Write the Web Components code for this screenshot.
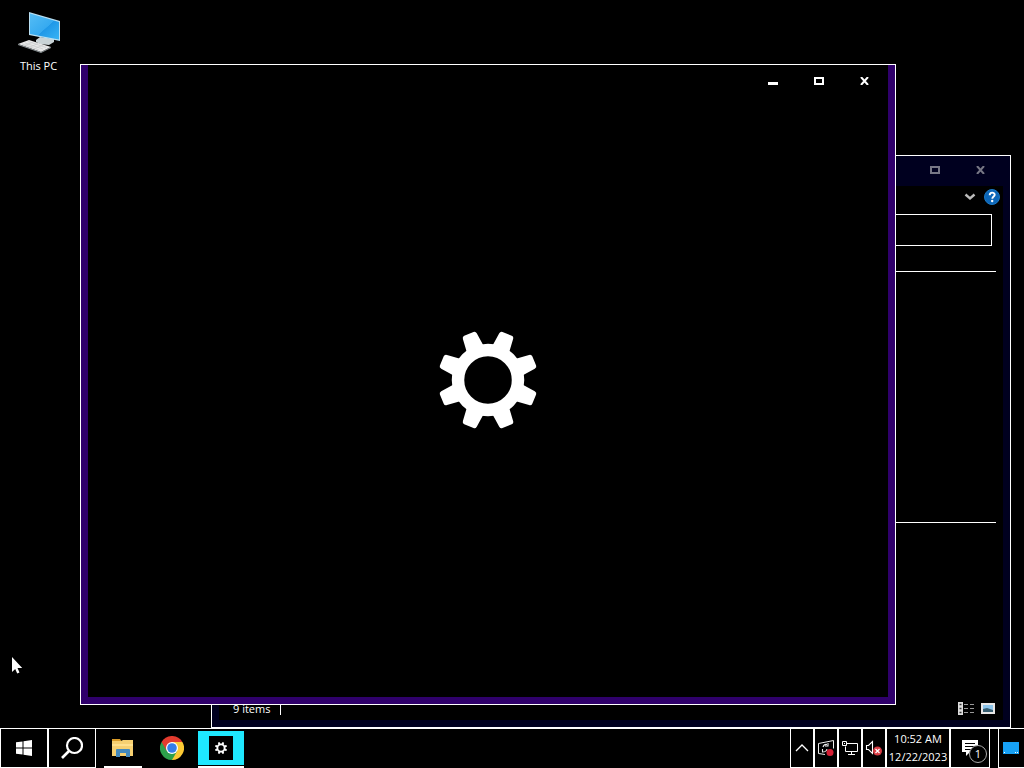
<!DOCTYPE html>
<html lang="en">
<head>
<meta charset="utf-8">
<title>Desktop</title>
<style>
html, body { margin: 0; height: 100%; background: #000; }
body { overflow: hidden; font: 11px/18px "Open Sans", "Noto Sans", sans-serif; color: #fff; cursor: default; }
</style>
</head>
<body>
<desk-top>
  <desk-shortcut slot="items">This PC</desk-shortcut>
  <explorer-window slot="items"></explorer-window>
  <settings-window slot="items"></settings-window>
  <mouse-pointer slot="items"></mouse-pointer>
  <task-bar slot="bar"></task-bar>
</desk-top>
<script>
const define = (name, html) => customElements.define(name, class extends HTMLElement {
  constructor() {
    super();
    this.attachShadow({ mode: 'open' }).innerHTML =
      '<style>:host,*{box-sizing:border-box}button{font:inherit;color:inherit;background:none;border:0;padding:0;margin:0;display:flex;align-items:center;justify-content:center}svg{display:block;flex:none}</style>' + html;
  }
});

define('desk-top', `
<style>
:host { display: flex; flex-direction: column; height: 100vh; }
main { position: relative; flex: 1; min-height: 0; }
</style>
<main><slot name="items"></slot></main>
<slot name="bar"></slot>`);

define('desk-shortcut', `
<style>
:host { position: absolute; left: 0; top: 10px; width: 77px; }
button { flex-direction: column; width: 100%; gap: 3px; }
</style>
<button>
<svg width="48" height="44" viewBox="0 0 48 44">
  <defs><linearGradient id="g" x1="0" y1="0" x2="1" y2="1"><stop offset="0" stop-color="#55bdf5"/><stop offset=".55" stop-color="#36aaf0"/><stop offset=".56" stop-color="#1f98e8"/><stop offset="1" stop-color="#38b4f5"/></linearGradient></defs>
  <path d="M21 30l4-3 14 2v3l-5 3-9-1-4-2z" fill="#c9d3d6"/>
  <path d="M14 2l31 9v20l-31-6z" fill="#b9dff2"/>
  <path d="M15 3.500l29 8.500v17.500l-29-5.500z" fill="url(#g)"/>
  <path d="M3 34l11-4 22 7-10 5z" fill="#e8e8e8"/>
  <path d="M7 34l17 6M10 33l18 6M13 31.500l18 6M9 36l9-4M14 37.500l9-4M19 39l9-4" stroke="#c2c6c8" stroke-width=".6"/>
  <path d="M3 34l23 8 10-5v1l-10 5-23-8z" fill="#8c9498"/>
</svg>
<slot></slot>
</button>`);

define('explorer-window', `
<style>
:host { position: absolute; left: 211px; top: 155px; right: 13px; bottom: 0; display: flex; flex-direction: column;
  border: 1px solid #fff; background: #00001f; padding: 0 7px 7px; }
header { height: 30px; flex: none; display: flex; justify-content: flex-end; color: #777785; margin-right: -1px; }
header button { width: 46px; height: 28px; }
.body { flex: 1; min-height: 0; background: #000; display: flex; flex-direction: column; padding: 0 7px 0 14px; }
.ribbon { height: 28px; flex: none; display: flex; align-items: center; justify-content: flex-end; gap: 8px; padding-bottom: 6px; margin-right: -4px; }
input { height: 32px; flex: none; border: 1px solid #fff; background: #000; color: #fff; width: calc(100% - 4px); }
.pane { margin-top: 25px; height: 252px; border: solid #fff; border-width: 1px 0; }
footer { margin-top: auto; display: flex; align-items: center; height: 23px; margin-right: -3px; }
footer span { border-right: 1px solid #fff; line-height: 12px; padding-right: 10px; margin-right: auto; }
footer button { width: 22px; height: 18px; }
</style>
<header>
  <button aria-label="Maximize"><svg width="10" height="8"><path d="M1 1h8v6h-8z" fill="none" stroke="currentColor" stroke-width="2"/></svg></button>
  <button aria-label="Close"><svg width="10" height="8"><path d="M1 0l7 8M8 0l-7 8" stroke="currentColor" stroke-width="2"/></svg></button>
</header>
<div class="body">
  <div class="ribbon">
    <button aria-label="Expand ribbon"><svg width="12" height="8"><path d="M1.500 1.500l4.500 4 4.500-4" fill="none" stroke="#bbb" stroke-width="2.400"/></svg></button>
    <button aria-label="Help"><svg width="16" height="16"><circle cx="8" cy="8" r="7.500" fill="#0c66b8" stroke="#1b78c4"/><path d="M5.700 6.200c0-3.500 5-3.200 5-.5 0 1.700-2.400 1.900-2.400 4" fill="none" stroke="#fff" stroke-width="1.900"/><circle cx="8.200" cy="12" r="1.200" fill="#fff"/></svg></button>
  </div>
  <input type="text" aria-label="Address">
  <div class="pane"></div>
  <footer><span>9 items</span>
    <button aria-label="Details view"><svg width="16" height="13"><path d="M0 0h5v13h-5z" fill="#ddd"/><path d="M1.500 2.500h2M1.500 6.500h2M1.500 10.500h2" stroke="#333" stroke-width="1.500"/><path d="M6 2.500h10M6 6.500h10M6 10.500h10" stroke="#999" stroke-dasharray="4 2"/></svg></button>
    <button aria-label="Large icons view"><svg width="14" height="11"><path d="M0 0h14v11h-14z" fill="#e6e6e6"/><path d="M2 2h10v7h-10z" fill="#8cc4ea"/><path d="M2 6l4-1 6 2v2h-10z" fill="#365d70"/></svg></button>
  </footer>
</div>`);

const gear = (() => {
  let teeth = '';
  for (let i = 0; i < 8; i++) teeth += `<path d="M-9 -33L-7.500 -47.500Q-7.200 -50 -5 -50H5Q7.200 -50 7.500 -47.500L9 -33z" transform="rotate(${22.5 + i * 45})"/>`;
  return teeth;
})();

define('settings-window', `
<style>
:host { position: absolute; left: 80px; top: 64px; right: 128px; bottom: 23px; display: flex; flex-direction: column;
  border: 1px solid #fff; background: #000; }
.frame { flex: 1; display: flex; flex-direction: column; border: solid #2f006b; border-width: 0 7px 7px; }
header { display: flex; justify-content: flex-end; height: 32px; }
header button { width: 46px; height: 32px; }
.splash { flex: 1; display: flex; align-items: center; justify-content: center; padding-bottom: 34px; }
</style>
<div class="frame">
<header>
  <button aria-label="Minimize"><svg width="10" height="8"><path d="M0 5h10v3h-10z" fill="#fff"/></svg></button>
  <button aria-label="Maximize"><svg width="10" height="8"><path d="M1 1h8v6h-8z" fill="none" stroke="#fff" stroke-width="2"/></svg></button>
  <button aria-label="Close"><svg width="10" height="8"><path d="M1 0l7 8M8 0l-7 8" stroke="#fff" stroke-width="2"/></svg></button>
</header>
<div class="splash">
  <svg width="98" height="98" viewBox="-49 -49 98 98" fill="#fff">${gear}<circle r="30" fill="none" stroke="#fff" stroke-width="12.500"/></svg>
</div>
</div>`);

define('mouse-pointer', `
<style>:host { position: absolute; left: 11px; top: 656px; }</style>
<svg width="13" height="19"><path d="M1 1v15l3.200-3 2 4.500 2.300-1-2-4.500h4.700z" fill="#fff"/></svg>`);

define('task-bar', `
<style>
:host { display: flex; flex: none; height: 40px; background: #000; border-top: 1px solid #fff; }
.cell { border: solid #fff; border-width: 0 1px 1px; height: 39px; flex: none; }
.menu { width: 48px; }
.app { width: 46px; height: 39px; flex: none; flex-direction: column; padding-top: 1px; }
.app i { height: 34px; width: 100%; display: flex; align-items: center; justify-content: center; margin-bottom: 1px; }
.app::after { content: ""; height: 2px; width: 38px; background: transparent; }
.open::after { background: #fff; }
.active::after { width: 46px; }
.active i { background: #1ee8ff; }
.apps { display: flex; gap: 3px; padding-left: 4px; margin-right: auto; }
.tray { width: 24px; }
.clock { width: 64px; flex-direction: column; text-align: center; line-height: 18px; }
.note { width: 40px; margin-right: 8px; position: relative; }
.note b { position: absolute; left: 18px; top: 16px; width: 18px; height: 18px; border: 1px solid #aaa; border-radius: 50%; background: #000; font-weight: 400; line-height: 16px; text-align: center; }
.show { width: 26px; border-right: 0; padding-right: 1px; }
</style>
<button class="cell menu" aria-label="Start"><svg width="16" height="16"><path d="M0 2.300L6.500 1.400V7.500H0zM7.500 1.200L16 0v7.500H7.500zM0 8.500h6.500v6.100L0 13.700zM7.500 8.500H16V16l-8.500-1.200z" fill="#fff"/></svg></button>
<button class="cell menu" aria-label="Search"><svg width="22" height="22"><circle cx="13.500" cy="8.500" r="7.500" fill="none" stroke="#fff" stroke-width="2.200"/><path d="M8 14l-7 7" stroke="#fff" stroke-width="2.600"/></svg></button>
<div class="apps">
  <button class="app open" aria-label="File Explorer"><i><svg width="22" height="20"><path d="M0 1h8l2 3h-10z" fill="#d99b28"/><path d="M0 3h9l2-1h10v16h-21z" fill="#f6d071"/><path d="M0 6h21v2h-21z" fill="#ffe08d"/><path d="M4 19v-7q0-1 1-1h12q1 0 1 1v7h-4v-4h-6v4z" fill="#4389bd"/></svg></i></button>
  <button class="app" aria-label="Chrome"><i><svg width="24" height="24" viewBox="-12 -12 24 24"><path d="M0 0L-10.400 -6A12 12 0 0 1 10.400 -6z" fill="#e33b2e"/><path d="M0 0L10.400 -6A12 12 0 0 1 0 12z" fill="#fcc934"/><path d="M0 0L0 12A12 12 0 0 1 -10.400 -6z" fill="#2da04b"/><path d="M0 -6H10.400L5 3z" fill="#fcc934"/><path d="M5.200 3L0 12L-4 5z" fill="#2da04b"/><path d="M-5.200 3L-10.400 -6L0 -6z" fill="#e33b2e"/><circle r="6" fill="#fff"/><circle r="4.800" fill="#357de8"/></svg></i></button>
  <button class="app open active" aria-label="Settings"><i><svg width="24" height="24" viewBox="-12 -12 24 24"><path d="M-12 -12h24v24h-24z"/><g fill="#fff"><g transform="scale(.122)">${gear}</g><circle r="3.600" fill="#000" stroke="#fff" stroke-width="1.800"/></g></svg></i></button>
</div>
<button class="cell tray" aria-label="Show hidden icons"><svg width="14" height="8"><path d="M1 7l6-6 6 6" fill="none" stroke="#fff" stroke-width="1.300"/></svg></button>
<button class="cell tray" aria-label="Sync"><svg width="18" height="18"><path d="M8 15.500l-6.500-1v-10l15-3v8" fill="none" stroke="#eee"/><path d="M6 8q1-3 4-2.500M11 4v3h-3M5.500 10v3.500M5.500 13q4 0 4.500-3" fill="none" stroke="#eee" stroke-width="1.100"/><circle cx="13" cy="13.500" r="3.500" fill="#d61f35"/></svg></button>
<button class="cell tray" aria-label="Network"><svg width="16" height="14"><path d="M5 2.500h10.500v8h-12v-5M9.500 11v2.500M6 13.500h7" fill="none" stroke="#fff"/><path d="M.5.500h4v4h-4zM2 2.500h1" fill="none" stroke="#fff"/></svg></button>
<button class="cell tray" aria-label="Volume muted"><svg width="18" height="16"><path d="M1.500 5.500h2l4-4v12l-4-4h-2z" fill="none" stroke="#fff" stroke-width="1.100"/><circle cx="12.500" cy="11" r="4.500" fill="#d83b43"/><path d="M10.500 9l4 4M14.500 9l-4 4" stroke="#fff" stroke-width="1.200"/></svg></button>
<button class="cell clock"><span>10:52 AM</span><span>12/22/2023</span></button>
<button class="cell note" aria-label="Notifications"><svg width="16" height="16"><path d="M0 0h16v12h-8l-4 4v-4h-4z" fill="#fff"/><path d="M3 3.500h10M3 6.500h10M3 9.500h7" stroke="#000"/></svg><b>1</b></button>
<button class="cell show" aria-label="Show desktop"><svg width="16" height="12"><path d="M0 0h16v12h-16z" fill="#17a1f5"/><path d="M1 10.500h1M12 10.500h1M14 10.500h1" stroke="#fff"/></svg></button>`);
</script>
</body>
</html>
